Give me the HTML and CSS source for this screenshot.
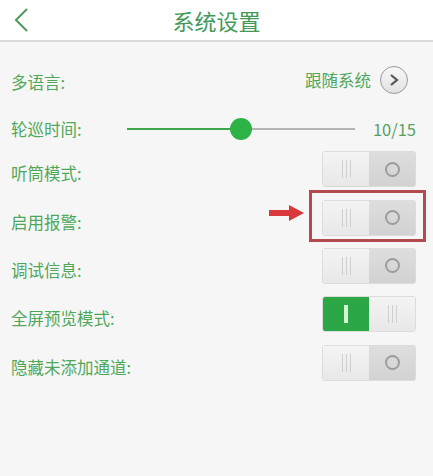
FILE: index.html
```html
<!DOCTYPE html>
<html lang="zh-CN">
<head>
    <meta charset="UTF-8">
    <meta name="viewport" content="width=device-width, initial-scale=1.0">
    <title>系统设置</title>
    <link rel="stylesheet" href="styles.css">
</head>
<body>
    <header class="top-bar">
        <div class="back">
            <svg width="16" height="26" viewBox="0 0 16 26">
                <polyline points="13,2 2,13 13,24" fill="none" stroke="#4d9a58" stroke-width="2"/>
            </svg>
        </div>
        <h1 class="title">系统设置</h1>
        <div></div>
    </header>

    <div class="settings">
        <div class="row row-lang">
            <span class="label">多语言:</span>
            <span class="lang-value">跟随系统</span>
            <span class="go">
                <svg width="14" height="14" viewBox="0 0 14 14">
                    <polyline points="4,2 10,7 4,12" fill="none" stroke="#555" stroke-width="2.2"/>
                </svg>
            </span>
        </div>

        <div class="row row-slider">
            <span class="label label-wide">轮巡时间:</span>
            <div class="track">
                <div class="track-fill" style="width: 50%"></div>
                <div class="thumb" style="left: 50%"></div>
            </div>
            <span class="slider-value">10/15</span>
        </div>

        <div class="row row-switch">
            <span class="label">听筒模式:</span>
            <div class="switch">
                <span class="half grip"><i></i><i></i><i></i></span>
                <span class="half knob"><b></b></span>
            </div>
        </div>

        <div class="row row-switch">
            <span class="label">启用报警:</span>
            <div class="switch marked">
                <span class="half grip"><i></i><i></i><i></i></span>
                <span class="half knob"><b></b></span>
                <span class="mark-box"></span>
                <span class="mark-arrow"></span>
            </div>
        </div>

        <div class="row row-switch">
            <span class="label">调试信息:</span>
            <div class="switch">
                <span class="half grip"><i></i><i></i><i></i></span>
                <span class="half knob"><b></b></span>
            </div>
        </div>

        <div class="row row-switch">
            <span class="label">全屏预览模式:</span>
            <div class="switch on">
                <span class="half lit"><em></em></span>
                <span class="half grip"><i></i><i></i><i></i></span>
            </div>
        </div>

        <div class="row row-switch">
            <span class="label">隐藏未添加通道:</span>
            <div class="switch">
                <span class="half grip"><i></i><i></i><i></i></span>
                <span class="half knob"><b></b></span>
            </div>
        </div>
    </div>
</body>
</html>
```

FILE: styles.css
```css
body {
    margin: 0;
    font-family: "Noto Sans CJK SC", "Noto Sans", sans-serif;
    background: #f6f6f6;
    height: 476px;
    overflow: hidden;
}

.top-bar {
    display: grid;
    grid-template-columns: 1fr auto 1fr;
    align-items: center;
    height: 40px;
    background: #fff;
    border-bottom: 2px solid #dadada;
}

.back {
    padding-left: 14px;
    display: flex;
}

.title {
    margin: 0;
    font-size: 22px;
    font-weight: normal;
    color: #44995a;
    line-height: 40px;
}

.settings {
    padding: 14px 17px 0 11px;
}

.row {
    display: flex;
    align-items: center;
    justify-content: space-between;
    height: 48px;
    box-sizing: border-box;
    position: relative;
}

.label {
    font-size: 16.5px;
    color: #4fa85a;
    padding-top: 4px;
}

/* language row */
.lang-value {
    margin-left: auto;
    font-size: 16.5px;
    color: #4fa85a;
}

.go {
    width: 26px;
    height: 26px;
    margin-left: 9px;
    margin-right: 8px;
    border: 1px solid #9a9a9a;
    border-radius: 50%;
    background: linear-gradient(#f8f8f8, #e2e2e2);
    display: flex;
    align-items: center;
    justify-content: center;
}

/* slider row */
.row-slider {
    height: 41px;
    padding-top: 8px;
}

.label-wide {
    width: 116px;
    flex: none;
    padding-top: 0;
}

.track {
    flex: 1;
    height: 2px;
    background: #b4b4b4;
    position: relative;
}

.track-fill {
    height: 2px;
    background: #3ea84e;
}

.thumb {
    position: absolute;
    top: -10px;
    width: 22px;
    height: 22px;
    margin-left: -11px;
    border-radius: 50%;
    background: #2db245;
}

.slider-value {
    margin-left: 18px;
    font-size: 16.5px;
    color: #5a9f66;
}

/* switches */
.row-switch {
    height: 48.4px;
}

.row-switch .label {
    padding-top: 8px;
}

.switch {
    display: flex;
    width: 94px;
    height: 36px;
    border: 1px solid #dcdcdc;
    border-radius: 3px;
    box-sizing: border-box;
    position: relative;
}

.half {
    flex: 1;
    display: flex;
    align-items: center;
    justify-content: center;
    gap: 3px;
}

.grip {
    background: linear-gradient(#f4f4f4, #e8e8e8);
}

.grip i {
    width: 1px;
    height: 18px;
    background: #cfcfcf;
}

.knob {
    background: linear-gradient(#dedede, #d2d2d2);
}

.knob b {
    width: 11px;
    height: 11px;
    border: 2px solid #9c9c9c;
    border-radius: 50%;
}

.lit {
    background: #2ba845;
    border-radius: 2px 0 0 2px;
}

.lit em {
    width: 4px;
    height: 18px;
    background: #d4f5d4;
}

.mark-box {
    position: absolute;
    left: -14px;
    right: -11px;
    top: -11px;
    bottom: -7px;
    border: 3px solid #b24a50;
}

.mark-arrow {
    position: absolute;
    left: -54px;
    top: 9px;
    width: 21px;
    height: 6px;
    background: #d8373c;
}

.mark-arrow::after {
    content: "";
    position: absolute;
    left: 20px;
    top: -5px;
    border-left: 15px solid #d8373c;
    border-top: 8px solid transparent;
    border-bottom: 8px solid transparent;
}
```
